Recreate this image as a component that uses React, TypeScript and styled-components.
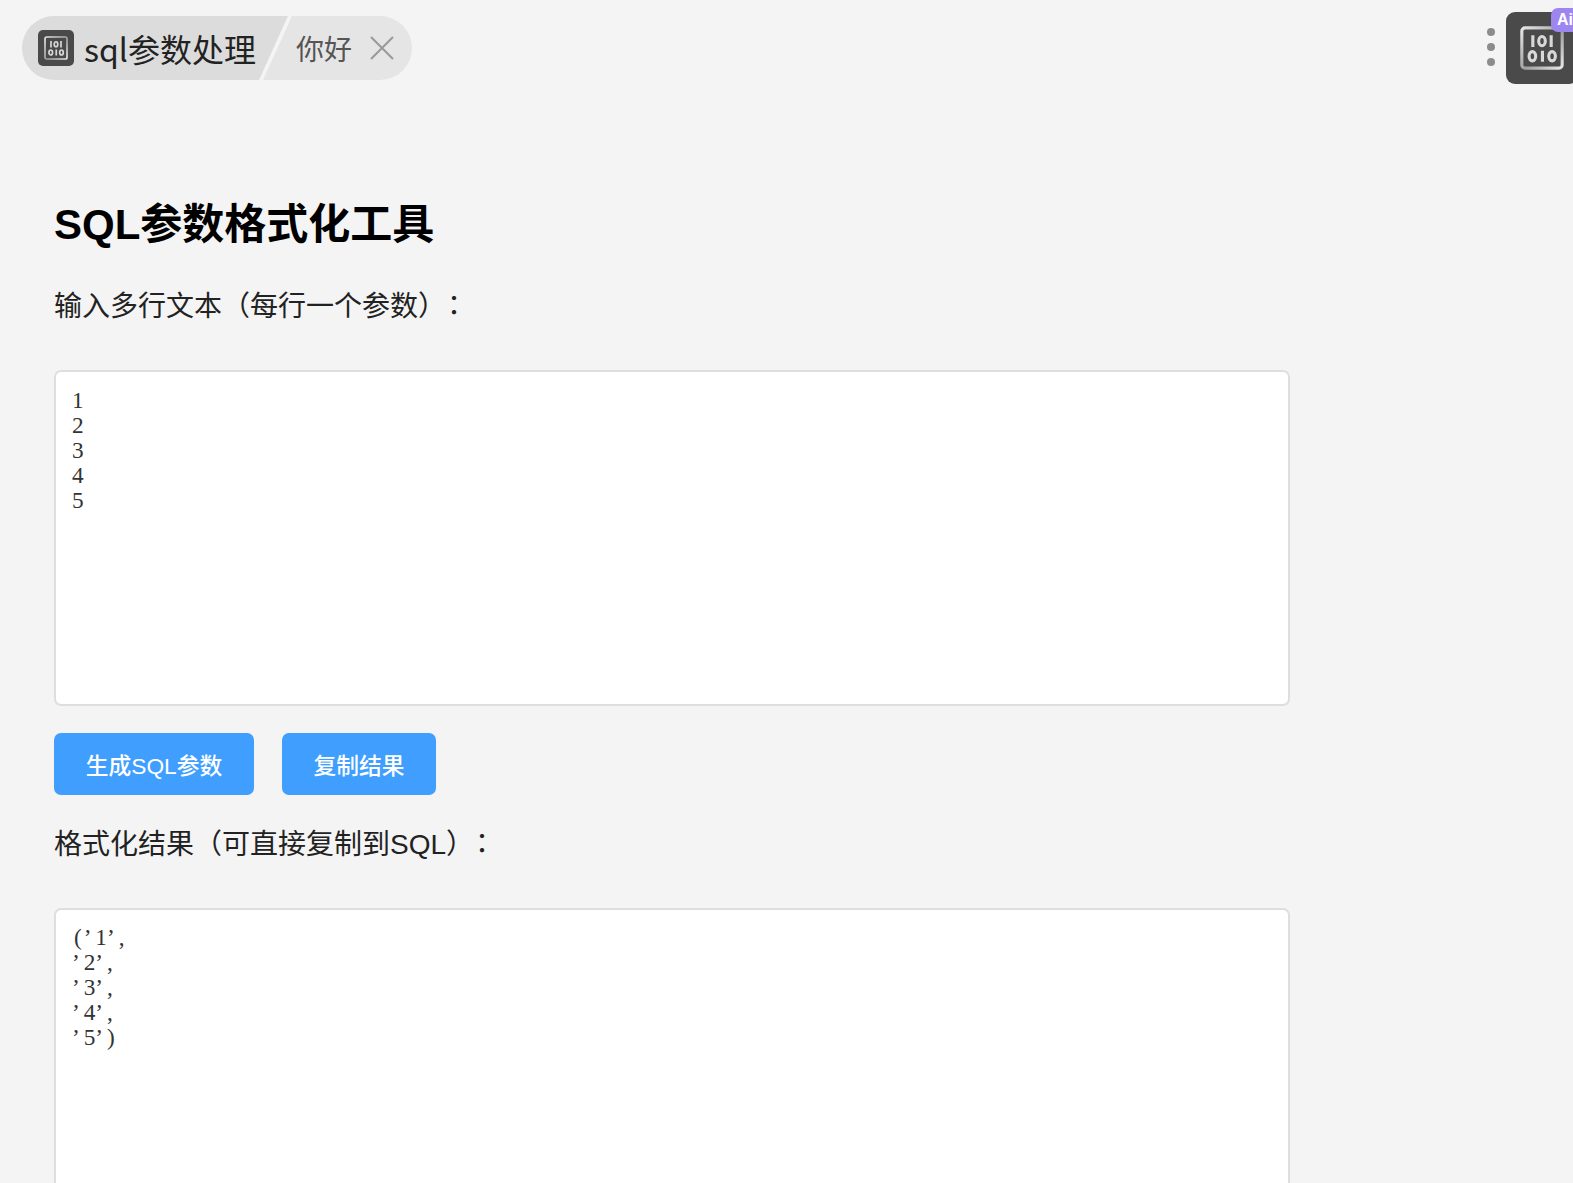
import styled, { createGlobalStyle } from "styled-components"

const input = "1\n2\n3\n4\n5"
const output = ["(’1’,", "’2’,", "’3’,", "’4’,", "’5’)"]

const GlobalStyle = createGlobalStyle`
  html, body {
    margin: 0;
    height: 100%;
    overflow: hidden;
    background: #f4f4f4;
  }
  * { box-sizing: border-box; }
`

const BinaryIcon = ({ size, className }: { size: number; className?: string }) => (
  <svg className={className} width={size} height={size} viewBox="0 0 48 48" fill="none">
    <defs>
      <linearGradient id="metal" x1="0" y1="0" x2="1" y2="1">
        <stop offset="0" stopColor="#e6e6e6" />
        <stop offset="0.55" stopColor="#a0a0a0" />
        <stop offset="1" stopColor="#e6e6e6" />
      </linearGradient>
    </defs>
    <rect x="2" y="2" width="44" height="44" rx="3.5" stroke="url(#metal)" strokeWidth="3.4" />
    <g stroke="#d8d8d8" strokeWidth="3.4">
      <path d="M14 10v13M34 10v13M24.5 27v12" />
      <ellipse cx="24" cy="16.5" rx="3.6" ry="5" />
      <ellipse cx="13.5" cy="33" rx="3.6" ry="5" />
      <ellipse cx="35" cy="33" rx="3.6" ry="5" />
    </g>
  </svg>
)

const Page = styled.div`
  position: relative;
  padding: 16px 22px 0;
  font-family: "Liberation Sans", "Noto Sans CJK SC", sans-serif;
`

const TabPill = styled.div`
  display: flex;
  width: 390px;
  height: 64px;
`

const ActiveTab = styled.div`
  display: flex;
  align-items: center;
  gap: 10px;
  width: 266px;
  flex: none;
  padding-left: 16px;
  background: #dcdcdc;
  border-radius: 32px 0 0 32px;
  clip-path: polygon(0 0, 100% 0, calc(100% - 29px) 100%, 0 100%);
  font-family: "Noto Sans CJK SC", sans-serif;
  font-size: 32px;
  color: #222;
`

const TabIcon = styled.span`
  display: flex;
  align-items: center;
  justify-content: center;
  width: 36px;
  height: 36px;
  flex: none;
  background: #4a4a4a;
  border-radius: 5px;
`

const OtherTab = styled.div`
  display: flex;
  align-items: center;
  gap: 18px;
  flex: 1;
  margin-left: -25px;
  padding-left: 33px;
  background: #e5e5e5;
  border-radius: 0 32px 32px 0;
  clip-path: polygon(29px 0, 100% 0, 100% 100%, 0 100%);
  font-family: "Noto Sans CJK SC", sans-serif;
  font-size: 28px;
  color: #555;
`

const CloseIcon = styled.svg`
  width: 24px;
  height: 24px;
  stroke: #999;
  stroke-width: 2;
`

const FloatWidget = styled.div`
  position: absolute;
  top: 12px;
  left: 1487px;
  display: flex;
  align-items: center;
  gap: 11px;
`

const Dots = styled.div`
  display: flex;
  flex-direction: column;
  gap: 7px;
  margin-top: -2px;
`

const Dot = styled.span`
  width: 8px;
  height: 8px;
  border-radius: 50%;
  background: #8c8c8c;
`

const ToolButton = styled.div`
  position: relative;
  display: flex;
  align-items: center;
  justify-content: center;
  width: 72px;
  height: 72px;
  background: #4a4a4a;
  border-radius: 9px;
`

const AiBadge = styled.span`
  position: absolute;
  top: -4px;
  left: 45px;
  width: 34px;
  height: 24px;
  padding-left: 6px;
  background: #9d86f0;
  border-radius: 7px;
  font-size: 16px;
  line-height: 24px;
  font-weight: 700;
  color: #fff;
`

const Content = styled.main`
  width: 1236px;
  margin: 0 0 0 32px;
  padding-top: 114px;
`

const Title = styled.h1`
  margin: 0 0 28px;
  font-size: 42px;
  line-height: 62px;
  font-weight: 700;
  color: #000;
`

const Label = styled.p`
  margin: 0 0 43px;
  font-size: 28px;
  line-height: 40px;
  color: #222;
  text-spacing-trim: space-all;
`

// centred full-width colon, as in the reference
const Colon = styled.span`
  display: inline-block;
  width: 22px;
  text-indent: -6px;
  font-family: "Noto Sans CJK TC", sans-serif;
`

const Area = styled.textarea`
  display: block;
  width: 100%;
  height: 336px;
  padding: 16px;
  background: #fff;
  border: 2px solid #dedede;
  border-radius: 7px;
  outline: none;
  resize: none;
  font-family: "Liberation Serif", serif;
  font-size: 23.3px;
  line-height: 25px;
  color: #333;
`

const OutputBox = styled.div`
  width: 100%;
  height: 336px;
  padding: 15px 16px;
  background: #fff;
  border: 2px solid #dedede;
  border-radius: 7px;
  font-family: "Liberation Serif", serif;
  font-size: 23.3px;
  line-height: 25px;
  color: #333;
`

const OutputLine = styled.div`
  display: flex;
  height: 25px;
`

const Cell = styled.span<{ $centered: boolean }>`
  width: 11.67px;
  flex: none;
  text-align: ${(p) => (p.$centered ? "center" : "left")};
`

const Actions = styled.div`
  display: flex;
  gap: 28px;
  margin: 27px 0 27px;
`

const Button = styled.button<{ $width: number }>`
  width: ${(p) => p.$width}px;
  height: 62px;
  padding: 0;
  background: #409eff;
  border: none;
  border-radius: 7px;
  font-family: "Liberation Sans", "Noto Sans CJK SC", sans-serif;
  font-size: 22.75px;
  font-weight: 500;
  color: #fff;
`

export default function App() {
  return (
    <Page>
      <GlobalStyle />
      <TabPill>
        <ActiveTab>
          <TabIcon>
            <BinaryIcon size={24} />
          </TabIcon>
          sql参数处理
        </ActiveTab>
        <OtherTab>
          你好
          <CloseIcon viewBox="0 0 24 24">
            <path d="M1 1l22 22M23 1L1 23" />
          </CloseIcon>
        </OtherTab>
      </TabPill>

      <FloatWidget>
        <Dots>
          <Dot />
          <Dot />
          <Dot />
        </Dots>
        <ToolButton>
          <BinaryIcon size={44} />
          <AiBadge>Ai</AiBadge>
        </ToolButton>
      </FloatWidget>

      <Content>
        <Title>SQL参数格式化工具</Title>
        <Label>
          输入多行文本（每行一个参数）<Colon>：</Colon>
        </Label>
        <Area readOnly value={input} />
        <Actions>
          <Button $width={200}>生成SQL参数</Button>
          <Button $width={154}>复制结果</Button>
        </Actions>
        <Label>
          格式化结果（可直接复制到SQL）<Colon>：</Colon>
        </Label>
        <OutputBox>
          {output.map((line) => (
            <OutputLine key={line}>
              {line.split("").map((ch, i) => (
                <Cell key={i} $centered={ch === "("}>
                  {ch}
                </Cell>
              ))}
            </OutputLine>
          ))}
        </OutputBox>
      </Content>
    </Page>
  )
}
